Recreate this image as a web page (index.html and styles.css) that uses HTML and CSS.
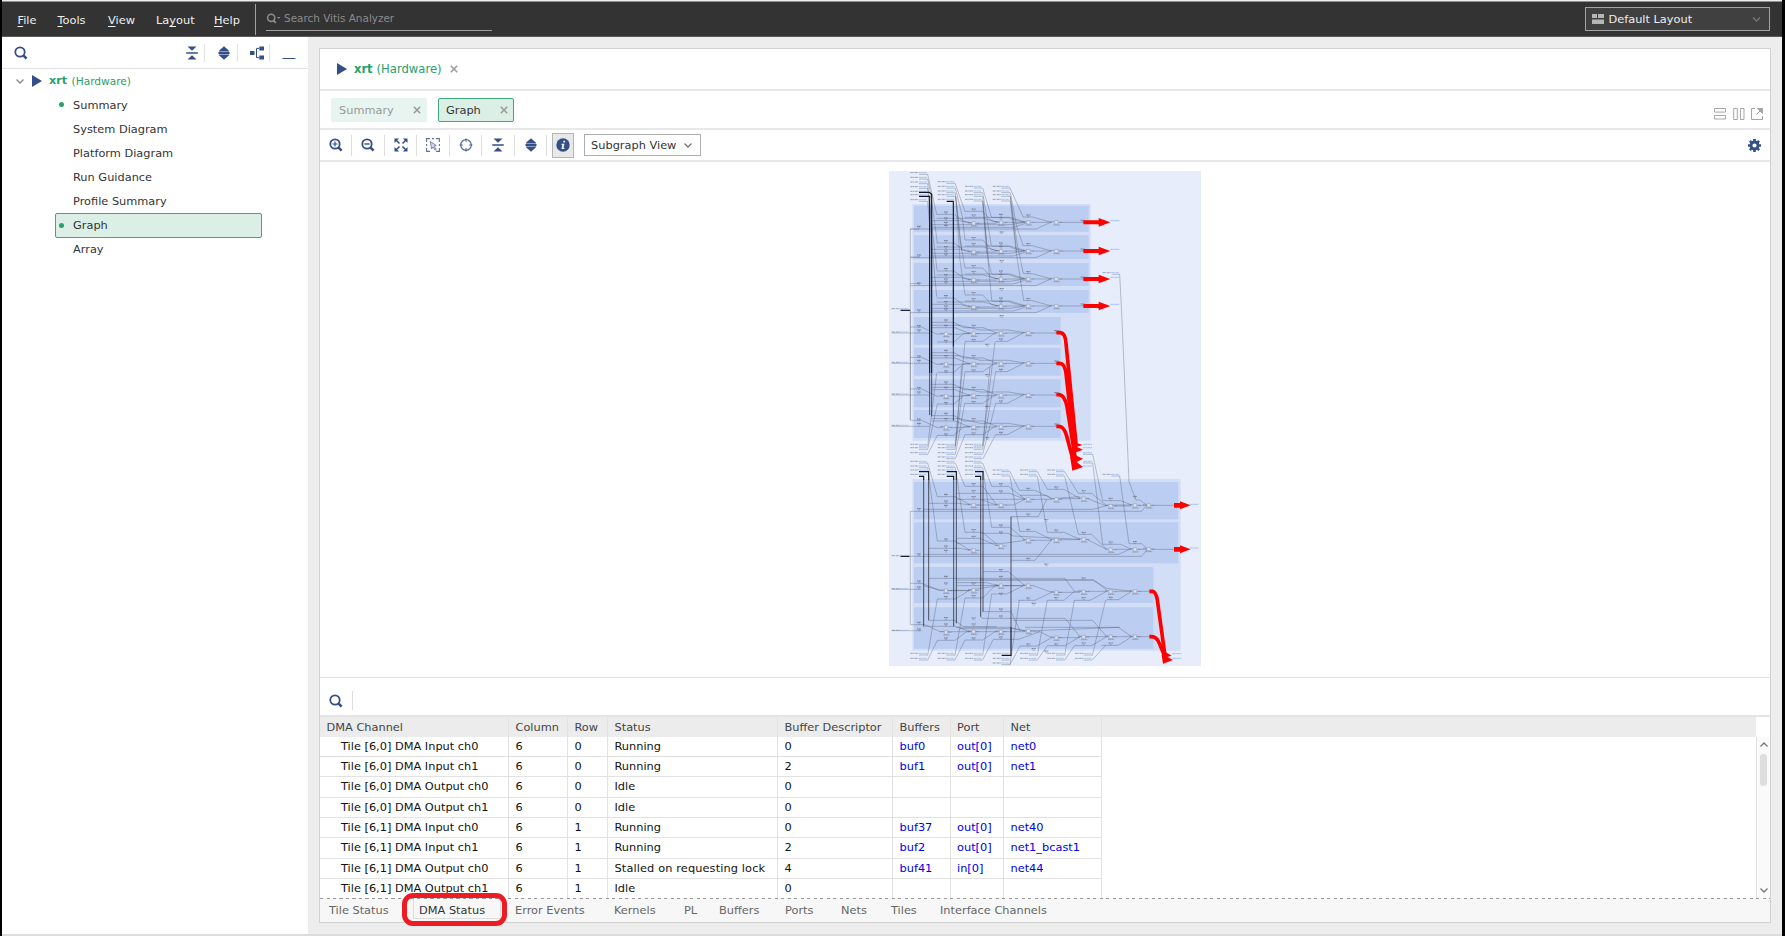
FILE: index.html
```html
<!DOCTYPE html>
<html lang="en">
<head>
<meta charset="utf-8">
<title>Vitis Analyzer</title>
<link rel="stylesheet" href="styles.css">
</head>
<body>
<svg class="defs" width="0" height="0">
  <symbol id="i-search" viewBox="0 0 14 14"><circle cx="6" cy="6" r="4.7" fill="none" stroke="currentColor" stroke-width="1.8"/><path d="M9.6 9.6L12.6 12.6" stroke="currentColor" stroke-width="2.6"/></symbol>
  <symbol id="i-collapse" viewBox="0 0 14 14"><path d="M2.5 .5h9L7 4.8zM2.5 13.5h9L7 9.2zM1.2 6.2h11.6v1.6H1.2z" fill="currentColor"/></symbol>
  <symbol id="i-expand" viewBox="0 0 14 14"><path d="M7 .3L12.3 5H1.7zM7 13.7L12.3 9H1.7zM1.5 6.1h11v1.8h-11z" fill="currentColor"/><path d="M2 5.5h10M2 8.5h10" stroke="#8fa2c6" stroke-width="1"/></symbol>
  <symbol id="i-play" viewBox="0 0 10 12"><path d="M0 0L10 6 0 12z" fill="currentColor"/></symbol>
  <symbol id="i-x" viewBox="0 0 8 8"><path d="M.8.8l6.4 6.4M7.2.8L.8 7.2" stroke="currentColor" stroke-width="1.5"/></symbol>
  <symbol id="i-down" viewBox="0 0 8 5"><path d="M.5.5L4 4 7.5.5" fill="none" stroke="currentColor" stroke-width="1.3"/></symbol>
</svg>

<div class="window">
  <header class="menubar">
    <nav class="menus">
      <span class="m-file"><u>F</u>ile</span><span class="m-tools"><u>T</u>ools</span><span class="m-view"><u>V</u>iew</span><span class="m-layout">La<u>y</u>out</span><span class="m-help"><u>H</u>elp</span>
    </nav>
    <div class="global-search">
      <svg width="15" height="11" viewBox="0 0 15 11"><circle cx="5.2" cy="4.8" r="3.6" fill="none" stroke="currentColor" stroke-width="1.6"/><path d="M7.5 7.5l2.3 2.3" stroke="currentColor" stroke-width="1.8"/><path d="M11 4h3.4l-1.7 2z" fill="currentColor"/></svg>
      <span>Search Vitis Analyzer</span>
    </div>
    <div class="layout-select">
      <svg width="12" height="11" viewBox="0 0 12 11"><path d="M0 0h5v4H0zM6 0h6v4H6zM0 5.5h12V10H0z" fill="#b5b5b5"/></svg>
      <span>Default Layout</span>
      <svg class="chev" width="9" height="5"><use href="#i-down"/></svg>
    </div>
  </header>

  <div class="body">
    <aside class="sidebar">
      <div class="side-tools">
        <svg class="side-search" width="14" height="14"><use href="#i-search"/></svg>
        <span class="tool"><svg width="14" height="14"><use href="#i-collapse"/></svg></span>
        <span class="tool"><svg width="14" height="14"><use href="#i-expand"/></svg></span>
        <span class="tool"><svg width="14" height="14" viewBox="0 0 14 14"><path d="M0 5h4.5v4H0zM9.3.5H14v4H9.3zM9.3 9.5H14v4H9.3z" fill="currentColor"/><path d="M9 2.4H6.5v9.2H9" fill="none" stroke="currentColor" stroke-width="1"/></svg></span>
        <span class="tool"><svg width="14" height="14" viewBox="0 0 14 14"><path d="M.5 12.5h13" stroke="currentColor" stroke-width="1"/></svg></span>
      </div>
      <div class="tree">
        <div class="root"><svg class="chev" width="8" height="5"><use href="#i-down"/></svg><svg class="play" width="10" height="12"><use href="#i-play"/></svg><b>xrt</b><span>(Hardware)</span></div>
        <div class="item open">Summary</div>
        <div class="item">System Diagram</div>
        <div class="item">Platform Diagram</div>
        <div class="item">Run Guidance</div>
        <div class="item">Profile Summary</div>
        <div class="item open selected">Graph</div>
        <div class="item">Array</div>
      </div>
    </aside>

    <main class="card">
      <div class="doc-tab"><svg class="play" width="10" height="12"><use href="#i-play"/></svg><b>xrt</b><span>(Hardware)</span><svg class="close" width="8" height="8"><use href="#i-x"/></svg></div>
      <div class="view-tabs">
        <div class="view-tab t-summary"><span>Summary</span><svg width="8" height="8"><use href="#i-x"/></svg></div>
        <div class="view-tab active t-graph"><span>Graph</span><svg width="8" height="8"><use href="#i-x"/></svg></div>
        <div class="win-icons">
          <svg width="12" height="12" viewBox="0 0 12 12"><path d="M.5.5h11v3.6H.5zM.5 7.4h11V11H.5z"/></svg>
          <svg width="12" height="12" viewBox="0 0 12 12"><path d="M.7.5h3.6v11H.7zM7.4.5H11v11H7.4z"/></svg>
          <svg width="12" height="12" viewBox="0 0 12 12"><path d="M4 .5H.5v11h11V8M5.5 6.5L9 3"/><path d="M6.5.5h5v5z" fill="currentColor"/></svg>
        </div>
      </div>
      <div class="toolbar">
        <span class="tb"><svg width="14" height="14" viewBox="0 0 14 14"><use href="#i-search"/><path d="M3.4 6h5.2M6 3.4v5.2" stroke="currentColor" stroke-width="1.2"/></svg></span>
        <span class="tb"><svg width="14" height="14" viewBox="0 0 14 14"><use href="#i-search"/><path d="M3.4 6h5.2" stroke="currentColor" stroke-width="1.4"/></svg></span>
        <span class="tb"><svg width="14" height="14" viewBox="0 0 14 14"><path d="M.5.5h4.6L.5 5.1zM13.5.5H8.9l4.6 4.6zM.5 13.5h4.6L.5 8.9zM13.5 13.5H8.9l4.6-4.6z" fill="currentColor"/><path d="M2 2l3.5 3.5M12 2L8.5 5.5M2 12l3.5-3.5M12 12L8.5 8.5" stroke="currentColor" stroke-width="1.5"/></svg></span>
        <span class="tb"><svg width="14" height="14" viewBox="0 0 14 14"><path d="M.6 4V.6H4M6 .6h2M10 .6h3.4V4M.6 6v2M.6 10v3.4H4M10 13.4h3.4V10M13.4 6v2" fill="none" stroke="currentColor" stroke-width="1.1" stroke-opacity=".8"/><path d="M4.3 3.5l6 4-2.3.8 2.3 3-1.2.8-2.200-3-1.300 1.800z" fill="#d5ddec" stroke="currentColor" stroke-width=".8" stroke-opacity=".8"/></svg></span>
        <span class="tb"><svg width="14" height="14" viewBox="0 0 14 14"><circle cx="7" cy="7" r="5.300" fill="none" stroke="currentColor" stroke-width="1.200" stroke-opacity=".85"/><path d="M7 .5v3.500M7 10v3.500M.5 7H4M10 7h3.500" stroke="currentColor" stroke-width="1.200" stroke-opacity=".7"/></svg></span>
        <span class="tb"><svg width="14" height="14"><use href="#i-collapse"/></svg></span>
        <span class="tb"><svg width="14" height="14"><use href="#i-expand"/></svg></span>
        <span class="tb info"><svg width="14" height="14" viewBox="0 0 14 14"><circle cx="7" cy="7" r="6.700" fill="currentColor"/><path d="M7.300 2.800h1.800v1.700H7.300zM5.600 5.700h2.900l-.9 4h.9l-.2 1.300H5.400l.9-4h-.9z" fill="#eee"/></svg></span>
        <div class="view-select"><span>Subgraph View</span><svg width="8" height="5"><use href="#i-down"/></svg></div>
        <svg class="gear" width="13" height="13" viewBox="0 0 13 13"><circle cx="6.500" cy="6.500" r="3.500" fill="none" stroke="currentColor" stroke-width="2.800"/><path d="M6.500 0v2M6.500 11v2M0 6.500h2M11 6.500h2M1.900 1.900l1.400 1.400M9.700 9.700l1.400 1.400M1.900 11.100l1.400-1.400M9.700 3.300l1.400-1.400" stroke="currentColor" stroke-width="2.600"/></svg>
      </div>

      <div class="canvas">
        <svg class="graph" width="312" height="495" viewBox="27 33 936 1485" preserveAspectRatio="none">
          <defs>
            <g id="lb"><path d="M0 0h26" stroke="#808795" stroke-width="2.200" stroke-dasharray="7 1 3 2"/><path d="M26 0h24" stroke="#8fb2f2" stroke-width="2.200" stroke-dasharray="8 1 4 1"/></g>
            <g id="ob"><path d="M0 0h28" stroke="#8fb2f2" stroke-width="2.400" stroke-dasharray="8 1 4 1"/></g>
            <g id="st1"><use href="#lb"/><path d="M26 5H52" class="w"/></g>
            <g id="k"><path d="M-6-4H6" stroke="#6c7587" stroke-width="3" stroke-dasharray="5 1 3 1"/><path d="M-3 1H3" stroke="#76809a" stroke-width="1.600"/></g>
            <g id="n"><path d="M-5-5H5V5H-5z" fill="#dde2ec" stroke="#8089a0" stroke-width="1.300"/><path d="M-17-2h10M-8 8H11M7 0h10" stroke="#6a7386" stroke-width="1.800" stroke-dasharray="5 1"/></g>
            <g id="rowA">
              <path class="w" d="M91 20H468L512 0M155-5H240L270 3M155 7H390L435 0M155 15H400L440 2M170-24H222L250-4 275 2M170-12H310L355 0M255-33H308L335-4 360 0M255-15H390L435-1M335-14H385L400-8 435 0M430-16H457L515 0M290 3H350M375 0H430M457 0H515M540 0H610"/>
              <use href="#k" x="117" y="16"/><use href="#k" x="198" y="-27"/><use href="#k" x="198" y="-9"/><use href="#k" x="198" y="4"/><use href="#k" x="198" y="13"/><use href="#k" x="281" y="-36"/><use href="#k" x="281" y="-18"/><use href="#k" x="363" y="-20"/><use href="#k" x="363" y="-10"/><use href="#k" x="445" y="-18"/><use href="#k" x="365" y="33"/><use href="#k" x="608" y="-2"/>
              <use href="#n" x="281" y="3"/><use href="#n" x="363" y="1"/><use href="#n" x="445"/><use href="#n" x="529"/>
            </g>
            <g id="rowB">
              <path class="w" d="M35 0H150M91-18H125L170 3H190M155-32H222L250-16H310L350 0M155-16H225L270 2M155-23H240L300-9H385L435-1M210 4H235L270 0M172 27H222L250 2H270M255 25H308L345 0M347 25H382L430 0M290 2H350M375 0H430M455 0H528"/>
              <use href="#lb" x="35" y="-3"/><use href="#k" x="117" y="-18"/><use href="#k" x="117" y="-5"/><use href="#k" x="198" y="-35"/><use href="#k" x="198" y="-19"/><use href="#k" x="281" y="-19"/><use href="#k" x="198" y="27"/><use href="#k" x="281" y="24"/><use href="#k" x="363" y="22"/><use href="#k" x="322" y="38"/>
              <use href="#n" x="198" y="3"/><use href="#n" x="281" y="2"/><use href="#n" x="363" y="1"/><use href="#n" x="445"/><use href="#k" x="529" y="-3"/>
            </g>
            <path id="arrU" d="M610-6H656V-13L691 0 656 13V6H610z" fill="#f00"/>
            <path id="arrL" d="M882-7H900V-12L932 0 900 12V7H882z" fill="#f00"/>
          </defs>
          <path fill="#e7edfa" d="M27 33H963V1518H27z"/>
          <path fill="#d2ddf6" d="M97 132H632V842H97zM97 957H902V1472H97z"/>
          <path fill="#bccdf2" d="M102 137H626V215H102zM102 226H626V297H102zM102 309H626V378H102zM102 390H626V459H102zM102 471H542V554H102zM102 563H542V647H102zM102 658H542V742H102zM102 750H542V834H102zM102 966H895V1078H102zM102 1087H895V1210H102zM102 1221H820V1329H102zM102 1342H820V1466H102z"/>

          <use href="#rowA" y="187"/><use href="#rowA" y="273"/><use href="#rowA" y="357"/><use href="#rowA" y="438"/>
          <use href="#rowB" y="519"/><use href="#rowB" y="610"/><use href="#rowB" y="705"/><use href="#rowB" y="799"/>

          <!-- input ports above the first group -->
          <use href="#st1" x="91" y="38"/><use href="#st1" x="91" y="52"/><use href="#st1" x="91" y="66"/><use href="#st1" x="91" y="80"/><use href="#lb" x="91" y="94"/><use href="#lb" x="91" y="104"/><use href="#st1" x="91" y="119"/>
          <use href="#st1" x="173" y="65"/><use href="#st1" x="173" y="79"/><use href="#st1" x="173" y="93"/><use href="#st1" x="173" y="104"/><use href="#lb" x="173" y="118"/>
          <use href="#st1" x="255" y="79"/><use href="#st1" x="255" y="93"/><use href="#st1" x="255" y="104"/><use href="#st1" x="255" y="118"/>
          <use href="#st1" x="338" y="79"/><use href="#st1" x="338" y="93"/><use href="#st1" x="338" y="104"/><use href="#st1" x="338" y="118"/>
          <path class="w" d="M143 43L170 163M143 57L152 100 172 249M143 71L157 210 171 330M143 85L160 300 170 410M143 124L148 185M225 70L255 154M226 84L247 170 255 240M226 98L240 240 255 324M227 109L240 300 255 404M227 109L245 270M308 84L335 173M308 98L325 200 334 258M308 109L325 300 334 341M308 123L335 421M390 84L430 172M391 98L410 200 430 258M391 109L411 250 430 340M391 123L409 280 431 421M308 123L320 280M391 109L410 275"/>
          <path class="w" d="M697 343H719L726 480 747 965 768 1020H780L800 1035"/>
          <path class="w" d="M91 207V780M60 451H91M91 207H117M91 291H117M91 371H117M91 451V780"/>
          <use href="#lb" x="35" y="446"/><path class="b" d="M62 451H90"/>
          <path class="b" d="M117 97H148L155 103V640M117 109H149V640M200 124H220V560"/>
          <path class="d" d="M155 640V769M149 640V765M220 560V782"/>
          <use href="#arrU" y="187"/><use href="#arrU" y="273"/><use href="#arrU" y="357"/><use href="#arrU" y="438"/>
          <use href="#ob" x="691" y="182"/><use href="#ob" x="691" y="268"/><use href="#ob" x="691" y="352"/><use href="#ob" x="691" y="433"/><use href="#lb" x="668" y="338"/>

          <!-- ports between the groups -->
          <use href="#st1" x="91" y="853"/><use href="#st1" x="91" y="863"/><use href="#st1" x="91" y="878"/><use href="#st1" x="91" y="904"/><use href="#st1" x="91" y="918"/><use href="#lb" x="91" y="930"/><use href="#lb" x="91" y="943"/>
          <use href="#st1" x="173" y="853"/><use href="#st1" x="173" y="863"/><use href="#st1" x="173" y="878"/><use href="#st1" x="173" y="891"/><use href="#st1" x="173" y="904"/><use href="#st1" x="173" y="918"/><use href="#lb" x="173" y="930"/><use href="#lb" x="173" y="943"/>
          <use href="#st1" x="255" y="853"/><use href="#st1" x="255" y="863"/><use href="#st1" x="255" y="878"/><use href="#st1" x="255" y="891"/><use href="#st1" x="255" y="904"/><use href="#st1" x="255" y="918"/><use href="#lb" x="255" y="930"/><use href="#lb" x="255" y="943"/>
          <use href="#st1" x="338" y="930"/><use href="#st1" x="338" y="943"/><use href="#st1" x="420" y="930"/><use href="#st1" x="420" y="943"/><use href="#st1" x="502" y="930"/><use href="#st1" x="502" y="943"/><use href="#st1" x="668" y="943"/>
          <use href="#ob" x="609" y="853"/><use href="#ob" x="609" y="863"/><use href="#ob" x="609" y="878"/><use href="#ob" x="609" y="904"/><use href="#ob" x="609" y="918"/>
          <path class="w" d="M143 858L170 640M143 868L172 732M143 883L172 826M225 858L255 545M225 868L255 635M226 883L254 730M226 896L255 824M308 858L345 545M308 868L347 635M308 883L347 730M309 896L347 824M227 858L245 620M308 858L330 620"/>
          <path class="w" d="M143 909L172 1010H225L270 1034M143 923L172 1143H225L270 1171M226 909L255 979H308L350 1034M226 923L255 1117H308L355 1157M308 909L335 979H385L435 1017M308 923L335 1102H390L435 1140M390 935L418 991H465L515 1016M390 948L419 1114H465L515 1139M472 935L502 988H552L600 1016M472 948L502 1117H552L600 1138M554 935L595 1000H635L680 1037M554 948L595 1123H635L680 1168M609 883H638L668 1022H722L755 1035M609 909H638L668 1153H722L755 1168M719 948L747 1151H785L800 1165"/>

          <!-- second group, wires -->
          <path class="w" d="M91 1053V1394M60 1189H91M91 1054H785L800 1036M91 1189H785L800 1170M91 1270H125L180 1291H270M91 1394H135L180 1415H270M35 1288H125M35 1412H125M131 1048H640L685 1035H755M131 1183H715L750 1168M146 1030H235L270 1035M146 1165H240L270 1171M229 1000H390L435 1018M229 1018H300L350 1035M229 1135H300L350 1157M303 1018H360L435 1018M303 1120H385L400 1128 600 1138M229 1150H370L435 1141M420 1006H500L515 1016 600 1010M290 1035H355M375 1035H400L435 1018M455 1018H515M540 1016H600M620 1015L680 1038M705 1038H755M775 1036H800M815 1036H882M455 1141H515M540 1139H600M620 1138L680 1168M705 1168H755M775 1168H800M815 1168H882M393 1070H475L500 1018M393 1201H465L515 1139"/>
          <path class="w" d="M146 1255H555L583 1294H680M229 1260H640L685 1294M229 1268H320L355 1277 230 1277M302 1252V1260H640L680 1285 755 1294M309 1235H385L435 1277M172 1317H225L270 1290 355 1277M255 1314H308L345 1277H435M335 1302H380L430 1277M460 1277L515 1297H600M415 1321H465L515 1297M502 1321H552L583 1294M583 1321H630L680 1294M680 1319H715L755 1294M705 1294H755M775 1294H808M210 1292H270M375 1277H430M146 1381H225L250 1400H350M131 1399H225L270 1415M229 1402H390L435 1413M302 1370L308 1375H555L600 1430M309 1355H393L420 1412M400 1381H638L680 1430M240 1406H400L435 1413 720 1402M172 1441H225L260 1415H350M255 1440H308L345 1415H435M340 1438H415L480 1415 515 1433H600M420 1458H470L515 1433M502 1457H555L600 1430H755M583 1457H635L680 1430M665 1456H715L755 1430M435 1402H715L755 1430H808M180 1291L130 1277M460 1415H480"/>
          <path class="w" d="M143 1486L172 1317M143 1500L172 1441M225 1486L255 1314M225 1500L255 1440M308 1486L335 1302M308 1500L340 1438M390 1514L420 1458M472 1486L502 1321M472 1500L502 1457M554 1486L583 1321M554 1500L583 1457M637 1486L677 1320M637 1500L677 1456M390 1514L418 1321"/>
          <path class="b" d="M117 935H146V960M117 949H131V960M200 935H229V960M200 949H221V960M285 935H309V960M285 949H302V960M365 1486H393V1400M62 1189H88"/>
          <path class="d" d="M146 960V1381M131 960V1399M229 960V1390M221 960V1399M309 960V1355M302 960V1370M393 1070V1400"/>

          <!-- kernels of the second group -->
          <use href="#n" x="281" y="1035"/><use href="#n" x="363" y="1035"/><use href="#n" x="445" y="1018"/><use href="#n" x="529" y="1018"/><use href="#n" x="611" y="1016"/><use href="#n" x="692" y="1038"/><use href="#n" x="765" y="1036"/><use href="#n" x="806" y="1036"/>
          <use href="#n" x="281" y="1171"/><use href="#n" x="363" y="1158"/><use href="#n" x="445" y="1141"/><use href="#n" x="529" y="1140"/><use href="#n" x="611" y="1138"/><use href="#n" x="692" y="1169"/><use href="#n" x="765" y="1168"/><use href="#n" x="806" y="1167"/>
          <use href="#n" x="198" y="1292"/><use href="#n" x="281" y="1291"/><use href="#n" x="363" y="1277"/><use href="#n" x="445" y="1277"/><use href="#n" x="529" y="1297"/><use href="#n" x="611" y="1295"/><use href="#n" x="692" y="1295"/><use href="#n" x="765" y="1294"/>
          <use href="#n" x="198" y="1417"/><use href="#n" x="281" y="1415"/><use href="#n" x="363" y="1415"/><use href="#n" x="445" y="1413"/><use href="#n" x="529" y="1433"/><use href="#n" x="611" y="1431"/><use href="#n" x="692" y="1430"/><use href="#n" x="765" y="1430"/>
          <use href="#k" x="117" y="1050"/><use href="#k" x="198" y="1007"/><use href="#k" x="198" y="1027"/><use href="#k" x="198" y="1040"/><use href="#k" x="281" y="975"/><use href="#k" x="281" y="996"/><use href="#k" x="281" y="1014"/><use href="#k" x="363" y="975"/><use href="#k" x="363" y="997"/><use href="#k" x="445" y="989"/><use href="#k" x="529" y="985"/><use href="#k" x="611" y="996"/><use href="#k" x="692" y="1019"/><use href="#k" x="765" y="1013"/><use href="#k" x="445" y="1066"/><use href="#k" x="499" y="1083"/>
          <use href="#k" x="117" y="1186"/><use href="#k" x="198" y="1141"/><use href="#k" x="198" y="1162"/><use href="#k" x="198" y="1175"/><use href="#k" x="281" y="1113"/><use href="#k" x="281" y="1133"/><use href="#k" x="363" y="1099"/><use href="#k" x="363" y="1120"/><use href="#k" x="445" y="1112"/><use href="#k" x="529" y="1114"/><use href="#k" x="611" y="1121"/><use href="#k" x="692" y="1150"/><use href="#k" x="765" y="1149"/><use href="#k" x="445" y="1199"/><use href="#k" x="499" y="1216"/>
          <use href="#k" x="117" y="1267"/><use href="#k" x="117" y="1285"/><use href="#k" x="198" y="1253"/><use href="#k" x="198" y="1273"/><use href="#k" x="281" y="1273"/><use href="#k" x="363" y="1233"/><use href="#k" x="363" y="1253"/><use href="#k" x="611" y="1258"/><use href="#k" x="198" y="1314"/><use href="#k" x="281" y="1311"/><use href="#k" x="363" y="1304"/><use href="#k" x="445" y="1318"/><use href="#k" x="529" y="1317"/><use href="#k" x="611" y="1317"/><use href="#k" x="692" y="1316"/><use href="#k" x="461" y="1334"/>
          <use href="#k" x="117" y="1391"/><use href="#k" x="117" y="1411"/><use href="#k" x="198" y="1377"/><use href="#k" x="198" y="1396"/><use href="#k" x="281" y="1378"/><use href="#k" x="281" y="1396"/><use href="#k" x="363" y="1351"/><use href="#k" x="363" y="1372"/><use href="#k" x="198" y="1438"/><use href="#k" x="281" y="1438"/><use href="#k" x="363" y="1435"/><use href="#k" x="445" y="1456"/><use href="#k" x="529" y="1456"/><use href="#k" x="611" y="1453"/><use href="#k" x="692" y="1453"/><use href="#k" x="461" y="1470"/><use href="#k" x="499" y="1477"/>
          <use href="#lb" x="35" y="1187"/><use href="#lb" x="35" y="1286"/><use href="#lb" x="35" y="1411"/>

          <!-- ports below the second group -->
          <use href="#st1" x="91" y="1480"/><use href="#st1" x="91" y="1495"/><use href="#st1" x="173" y="1480"/><use href="#st1" x="173" y="1495"/><use href="#st1" x="255" y="1480"/><use href="#st1" x="255" y="1495"/><use href="#lb" x="338" y="1480"/><use href="#st1" x="338" y="1495"/><use href="#st1" x="338" y="1509"/><use href="#st1" x="420" y="1480"/><use href="#st1" x="420" y="1495"/><use href="#st1" x="502" y="1480"/><use href="#st1" x="502" y="1495"/><use href="#st1" x="585" y="1480"/><use href="#st1" x="585" y="1495"/>
          <use href="#arrL" y="1036"/><use href="#arrL" y="1168"/>
          <use href="#ob" x="929" y="1033"/><use href="#ob" x="929" y="1164"/><use href="#ob" x="877" y="1481"/><use href="#ob" x="877" y="1495"/>
          <g class="red">
            <path d="M529 518H541Q556 519 558 550L588 850"/>
            <path d="M529 610H539Q554 610 558 640L583 862"/>
            <path d="M529 704H537Q554 705 561 740L585 890"/>
            <path d="M529 799H537Q552 799 560 828L584 918"/>
            <path d="M808 1294H818Q828 1296 832 1320L854 1480"/>
            <path d="M808 1430H815Q830 1430 838 1450L858 1498"/>
          </g>
          <path fill="#f00" d="M580 845L608 855 590 860 609 869 582 879 590 887 609 896 590 906 609 921 577 932 571 895zM850 1472L875 1487 862 1491 879 1500 849 1511 845 1485z"/>
        </svg>
      </div>

      <div class="find"><svg width="14" height="14"><use href="#i-search"/></svg></div>
      <div class="table-area">
        <div class="row head"><span>DMA Channel</span><span>Column</span><span>Row</span><span>Status</span><span>Buffer Descriptor</span><span>Buffers</span><span>Port</span><span>Net</span></div>
        <div class="table-body">
          <div class="rows">
            <div class="row"><span>Tile [6,0] DMA Input ch0</span><span>6</span><span>0</span><span>Running</span><span>0</span><span>buf0</span><span>out[0]</span><span>net0</span></div>
            <div class="row"><span>Tile [6,0] DMA Input ch1</span><span>6</span><span>0</span><span>Running</span><span>2</span><span>buf1</span><span>out[0]</span><span>net1</span></div>
            <div class="row"><span>Tile [6,0] DMA Output ch0</span><span>6</span><span>0</span><span>Idle</span><span>0</span><span></span><span></span><span></span></div>
            <div class="row"><span>Tile [6,0] DMA Output ch1</span><span>6</span><span>0</span><span>Idle</span><span>0</span><span></span><span></span><span></span></div>
            <div class="row"><span>Tile [6,1] DMA Input ch0</span><span>6</span><span>1</span><span>Running</span><span>0</span><span>buf37</span><span>out[0]</span><span>net40</span></div>
            <div class="row"><span>Tile [6,1] DMA Input ch1</span><span>6</span><span>1</span><span>Running</span><span>2</span><span>buf2</span><span>out[0]</span><span>net1_bcast1</span></div>
            <div class="row"><span>Tile [6,1] DMA Output ch0</span><span>6</span><span>1</span><span class="long">Stalled on requesting lock</span><span>4</span><span>buf41</span><span>in[0]</span><span>net44</span></div>
            <div class="row"><span>Tile [6,1] DMA Output ch1</span><span>6</span><span>1</span><span>Idle</span><span>0</span><span></span><span></span><span></span></div>
          </div>
          <div class="scrollbar"><svg class="up" width="8" height="5"><use href="#i-down"/></svg><div class="thumb"></div><svg class="dn" width="8" height="5"><use href="#i-down"/></svg></div>
        </div>
      </div>
      <div class="bottom-tabs">
        <span>Tile Status</span><span class="current">DMA Status</span><span>Error Events</span><span>Kernels</span><span>PL</span><span>Buffers</span><span>Ports</span><span>Nets</span><span>Tiles</span><span>Interface Channels</span>
      </div>
    </main>
  </div>
</div>
</body>
</html>
```
FILE: styles.css
```css
*, *::before, *::after { box-sizing: border-box; }
body {
  margin: 0;
  background: #000;
  font: 11.35px/16px "DejaVu Sans", sans-serif;
  color: #333;
  white-space: nowrap;
}
svg { display: block; flex: none; overflow: visible; }
.defs { position: absolute; }
.window {
  width: 1780px;
  height: 936px;
  margin-left: 2px;
  background: #ededed;
  border-top: 1px solid #ededed;
  border-bottom: 2px solid #dcdcdc;
  display: flex;
  flex-direction: column;
  overflow: hidden;
}

/* menu bar */
.menubar {
  height: 36px;
  flex: none;
  background: #333;
  border-top: 1px solid #8b9390;
  border-bottom: 1px solid #5a5a5a;
  display: flex;
  color: #efefef;
}
.menus { display: flex; width: 254px; height: 31px; margin-top: 2px; padding: 8px 0 0 15.5px; border-right: 1px solid #a0a0a0; font-size: 11.35px; }
.menus u { text-underline-offset: 2px; }
.m-file { width: 40px; }
.m-tools { width: 50.5px; }
.m-view { width: 48px; }
.m-layout { width: 58px; }
.global-search {
  width: 226px;
  height: 25px;
  margin: 4px 0 0 10px;
  border-bottom: 1px solid #a0a0a0;
  display: flex;
  gap: 3px;
  color: #8c8c8c;
  font-size: 10.45px;
  padding-top: 4px;
}
.global-search svg { margin-top: 3px; }
.layout-select {
  width: 185px;
  height: 24px;
  margin: 5px 12px 0 auto;
  border: 1px solid #a3a3a3;
  background: #404040;
  display: flex;
  align-items: center;
  gap: 4.5px;
  padding: 0 8px 0 6px;
  font-size: 11.35px;
}
.layout-select .chev { margin-left: auto; color: #777; }

.body { display: flex; flex: 1; min-height: 0; }

/* sidebar */
.sidebar { width: 306px; background: #fff; color: #333; }
.side-tools {
  height: 32px;
  border-bottom: 1px solid #e3e3e3;
  display: flex;
  align-items: center;
  color: #344f86;
}
.side-search { margin: 0 144px 0 12px; }
.tool { width: 32.4px; height: 18px; padding: 2px 0 0 12px; border-left: 1px solid #e3e3e3; }
.tool:nth-of-type(1) { border-left-color: transparent; }
.root { height: 24px; display: flex; align-items: center; color: #27a06b; padding-left: 14px; font-size: 10.6px; }
.root .chev { color: #888; margin-right: 8px; }
.play { color: #344f86; margin-right: 7px; }
.root b { font-size: 11.2px; margin-right: 4.5px; }
.item { height: 24.1px; margin: 0 46px 0 53px; padding: 0 0 1px 17px; border: 1px solid transparent; border-radius: 2px; display: flex; align-items: center; }
.item.open { padding-left: 3px; }
.item.open::before { content: ""; width: 5px; height: 5px; border-radius: 50%; background: #27a06b; margin-right: 9px; }
.item.selected { background: #dcefe6; border-color: #3bab7c; }

/* main card */
.card {
  width: 1452px;
  height: 875px;
  margin: 11px 0 0 11px;
  background: #fff;
  border: 1px solid #d2d2d2;
  display: flex;
  flex-direction: column;
}
.doc-tab { height: 42px; flex: none; border-bottom: 2px solid #e8e8e8; display: flex; align-items: center; padding-left: 17px; color: #27a06b; font-size: 11.6px; }
.doc-tab b { font-size: 11.5px; margin-right: 4px; }
.doc-tab .close { margin-left: 8px; color: #999; }
.view-tabs { height: 39px; flex: none; border-bottom: 2px solid #e8e8e8; display: flex; align-items: center; padding: 0 7px 0 11px; gap: 11px; }
.view-tab { height: 24px; border: 1px solid #e8f4ef; background: #e8f4ef; border-radius: 2px; display: flex; align-items: center; justify-content: space-between; padding: 0 5px 0 7px; color: #999; }
.view-tab.active { background: #dcefe6; border-color: #3bab7c; color: #333; }
.view-tab svg { color: #999; }
.t-summary { width: 96px; }
.t-graph { width: 76px; }
.win-icons { margin: 9px 0 0 auto; display: flex; gap: 6.5px; color: #a5a5a5; }
.win-icons svg { fill: none; stroke: #a5a5a5; stroke-width: 1; }
.toolbar { height: 32px; flex: none; border-bottom: 2px solid #e8e8e8; display: flex; align-items: center; color: #344f86; }
.tb { width: 32.45px; height: 21px; border-right: 1px solid #dedede; padding: 3px 0 0 9px; }
.tb.info { width: 22px; height: 25px; margin-left: 4.5px; border: 1px solid #b5b5b5; background: #e8e8e8; padding: 4px 0 0 3px; }
.view-select { width: 117px; height: 22px; margin-left: 10.5px; border: 1px solid #aeaeae; display: flex; align-items: center; justify-content: space-between; padding: 0 8px 0 6px; color: #333; }
.view-select svg { color: #777; }
.gear { margin: 0 9px 0 auto; }

.canvas { height: 515.5px; flex: none; border-bottom: 1px solid #e0e0e0; padding: 9px 0 0 569px; }
.graph { overflow: hidden; }
.graph .w { fill: none; stroke: #333a48; stroke-opacity: .5; stroke-width: 1.7; }
.graph .d { fill: none; stroke: #20242e; stroke-opacity: .75; stroke-width: 3; }
.graph .b { fill: none; stroke: #10141e; stroke-width: 3.4; }
.graph .red { fill: none; stroke: #f00; stroke-width: 11; }

.find { height: 39.5px; flex: none; padding: 16px 0 0 9px; color: #344f86; border-bottom: 2px solid #e5e5e5; }
.find::after { content: ""; display: block; width: 1px; height: 19px; background: #dedede; margin: -17px 0 0 22.5px; }

/* table */
.table-area { height: 181px; flex: none; overflow: hidden; }
.row { display: grid; grid-template-columns: 189px 59px 40px 170px 115px 57.5px 53.5px 97.5px; height: 20.37px; color: #111; }
.row span { border-right: 1px solid #e2e2e2; border-bottom: 1px solid #e2e2e2; padding: 1px 0 0 6.5px; }
.row.head { background: #ececec; width: 1436px; height: 19.5px; color: #444; }
.row.head span { border-bottom: 0; padding-top: 2px; }
.rows .row span:first-child { padding-left: 21px; }
.rows .row span:nth-child(n+6) { color: #0000e8; }
.rows .row .long { letter-spacing: .12px; }
.table-body { display: flex; justify-content: space-between; height: 161.5px; }
.rows { height: 161.5px; overflow: hidden; }
.scrollbar { width: 14px; height: 161.5px; border-left: 1px solid #e0e0e0; background: #fafafa; display: flex; flex-direction: column; align-items: center; color: #777; padding: 5px 0; }
.scrollbar .up { transform: rotate(180deg); }
.scrollbar .dn { margin-top: auto; }
.thumb { width: 7px; height: 32px; border-radius: 3px; background: #dedede; margin-top: 7px; }

.bottom-tabs {
  flex: 1;
  background: repeating-linear-gradient(90deg, #999 0 3px, #f7f7f7 3px 6.5px) 0 0 / 100% 1px no-repeat, #f7f7f7;
  display: grid;
  grid-template-columns: 90px 96px 99px 70px 35px 66px 56px 50px 49px 130px;
  padding: 4px 0 0 9px;
  color: #666;
}
.current { color: #333; position: relative; }
.current::before { content: ""; position: absolute; left: -6px; top: -3px; width: 88px; height: 20px; border: 1px solid #ddd; border-top: 0; }
.current::after { content: ""; position: absolute; left: -17px; top: -9px; width: 105px; height: 33px; border: 5px solid #ed1c24; border-radius: 11px; }
```
